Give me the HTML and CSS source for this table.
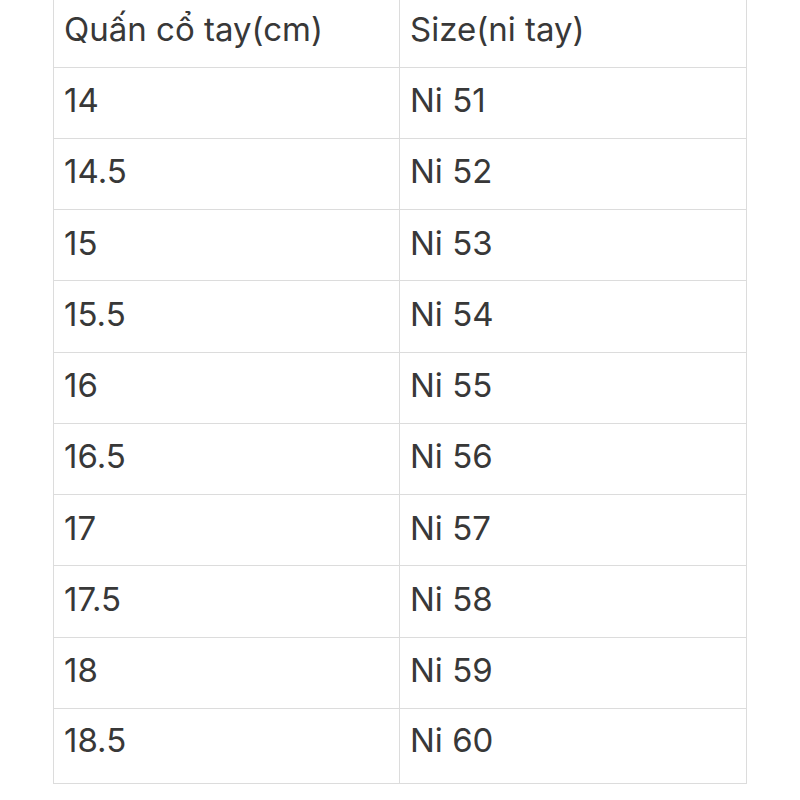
FILE: index.html
```html
<!DOCTYPE html>
<html lang="vi">
<head>
<meta charset="utf-8">
<link rel="stylesheet" href="styles.css">
</head>
<body>
<div class="page">
<table class="sizes">
<tr class="head"><td>Quấn cổ tay(cm)</td><td>Size(ni tay)</td></tr>
<tr><td>14</td><td>Ni 51</td></tr>
<tr><td>14.5</td><td>Ni 52</td></tr>
<tr><td>15</td><td>Ni 53</td></tr>
<tr><td>15.5</td><td>Ni 54</td></tr>
<tr><td>16</td><td>Ni 55</td></tr>
<tr><td>16.5</td><td>Ni 56</td></tr>
<tr><td>17</td><td>Ni 57</td></tr>
<tr><td>17.5</td><td>Ni 58</td></tr>
<tr><td>18</td><td>Ni 59</td></tr>
<tr class="last"><td>18.5</td><td>Ni 60</td></tr>
</table>
</div>
</body>
</html>
```

FILE: styles.css
```css
html, body {
  margin: 0;
  padding: 0;
  background: #ffffff;
}
.page {
  padding-left: 53px;
  margin-top: -4px;
}
.sizes {
  border-collapse: collapse;
  width: 694px;
  table-layout: fixed;
  font-family: Inter, "Noto Sans", sans-serif;
  font-size: 33px;
  color: #383838;
}
.sizes td {
  border: 1px solid #dcdcdc;
  height: 71.25px;
  padding: 0 0 4px 10px;
  box-sizing: border-box;
  vertical-align: middle;
  line-height: 1;
}
.sizes td:first-child {
  width: 346px;
}
.sizes .head td {
  border-top: none;
  height: 71px;
}
.sizes .last td {
  height: 75px;
  padding-bottom: 10px;
}
```
